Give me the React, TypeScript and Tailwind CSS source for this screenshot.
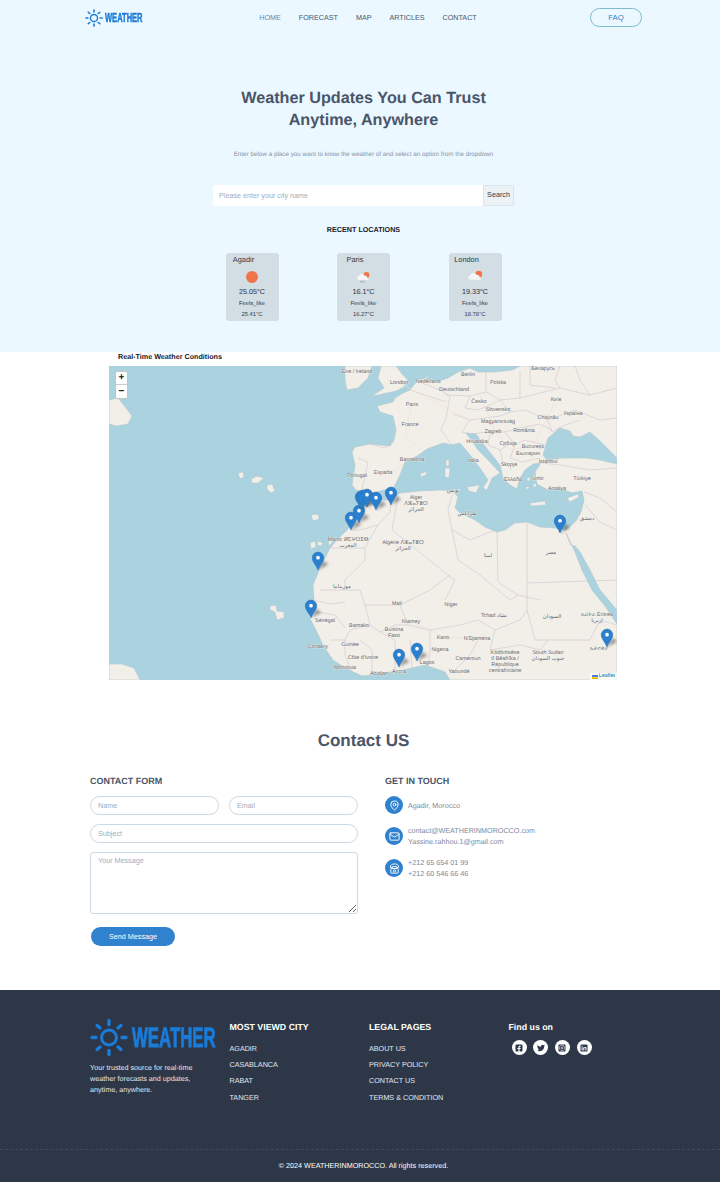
import { MapPin, Mail } from "lucide-react";
import { FaFacebookSquare, FaTwitter, FaInstagramSquare, FaLinkedin } from "react-icons/fa";

const navLinks = ["HOME", "FORECAST", "MAP", "ARTICLES", "CONTACT"];

const SunMark = ({ className }: { className: string }) => (
	<svg viewBox="0 0 38 38" className={className} fill="none" stroke="#1a7bd8" strokeLinecap="round">
		<circle cx="19" cy="19" r="7.500" strokeWidth="3" />
		<path strokeWidth="3.400" d="M19 2v4M19 32v4M2 19h4M32 19h4M7 7l3 2.500M31 7l-3 2.500M7 31l3-2.500M31 31l-3-2.500" />
	</svg>
);

const recent = [
	{ city: "Agadir", temp: "25.05°C", feels: "25.41°C", icon: "sun" },
	{ city: "Paris", temp: "16.1°C", feels: "16.27°C", icon: "rain" },
	{ city: "London", temp: "19.33°C", feels: "18.78°C", icon: "cloud" },
];

const WeatherIcon = ({ kind }: { kind: string }) => {
	if (kind === "sun") {
		return <div className="h-[12px] w-[12px] rounded-full bg-[#f0764a]" />;
	}
	return (
		<svg viewBox="0 0 18 14" className={kind === "rain" ? "h-[12px] w-[15px]" : "h-[13px] w-[17px]"}>
			<circle cx="12.500" cy="4.500" r="3.600" fill="#f0764a" />
			<path d="M3 10.500a2.400 2.400 0 0 1 .4-4.700 3.600 3.600 0 0 1 6.700-.6 2.800 2.800 0 0 1 3.400 2.800 1.300 1.300 0 0 1 .4 2.500z" fill="#f4f5f4" />
			{kind === "rain" && <path d="M6 11.500l-1 2.500M8 11.500l-1 2.500M10 11.500l-1 2.500" stroke="#8b96a0" strokeWidth=".8" />}
		</svg>
	);
};

const land = "M440 366L432 372 425 378 417 381 410 390 403 393 395 398 393 402 377 406 380 412 393 416 396 430 394 440 390 446 370 444 355 447 352 452 355 465 352 485 356 490 362 491 366 497 360 512 347 530 337 540 330 548 320 568 313 585 314 600 308 615 316 630 323 645 333 660 347 669 362 676 370 675 385 673 403 670 425 665 445 672 450 680 617 680 617 366Z";
const med = "M364 495L377 492 394 487 400 475 405 462 417 456 427 449 443 443 452 445 460 443 470 455 480 468 488 480 483 488 487 490 492 478 500 473 490 462 478 450 470 438 466 433 476 434 488 450 500 465 503 478 510 485 517 489 520 478 525 470 533 464 541 463 535 472 537 484 548 490 560 488 572 493 582 491 584 500 581 512 576 521 566 530 555 528 540 527 527 522 515 523 505 530 497 532 485 527 475 520 460 513 455 508 458 497 453 491 440 490 420 491 400 493 391 500 376 500 366 499Z";
const blackSea = "M543 455L548 438 560 428 570 431 573 436 580 437 590 432 600 441 607 448 617 458 617 464 600 460 587 458 563 458 547 460Z";
const redSea = "M566 533L571 545 575 546 580 552 590 570 600 590 617 610 617 624 605 606 592 590 582 570 575 552Z";
const northSea = "M440 366L520 366 512 370 495 372 478 372 470 368 458 372 448 378 436 382 425 380 432 372Z";
const islands = [
	"M381 366L396 366 402 374 408 380 404 387 396 391 378 395 372 396 384 388 378 378Z",
	"M345 366L372 366 368 378 358 388 347 390 345 380Z",
	"M109 400L118 398 126 408 132 416 128 424 116 426 109 424Z",
	"M109 664L122 664 134 668 140 680 109 680Z",
	"M238 473L243 472 244 477 240 479Z",
	"M251 479L257 476 264 478 258 483 252 483Z",
	"M267 485L272 484 275 491 271 493 267 489Z",
	"M311 515L318 514 319 519 313 521Z",
	"M310 543L315 541 316 547 311 549Z",
	"M318 541L323 543 321 546 317 545Z",
	"M329 541L333 536 332 543 328 546Z",
	"M270 606L276 605 277 611 284 612 284 618 277 620 275 612 270 610Z",
];
const medIslands = [
	"M467 487L480 485 476 493 469 491Z",
	"M446 460L449 460 449 466 446 466Z",
	"M445 468L450 468 449 478 445 477Z",
	"M420 474L427 471 426 475 421 477Z",
	"M530 503L545 501 546 505 531 506Z",
	"M567 498L578 494 579 497 570 502Z",
	"M527 478L530 477 530 481 527 481Z",
	"M533 484L536 483 536 487 533 487Z",
	"M526 487L529 486 529 489 526 489Z",
];
const borders = [
	"M417 381L440 390 450 396 446 418 441 430 452 445",
	"M410 390L425 395 446 402",
	"M446 395L470 396 486 392 500 400 520 398 520 372",
	"M486 392L486 370",
	"M500 400L510 412 525 410 548 420 575 410 600 420 617 418",
	"M453 414L470 420 485 418 500 416 510 412",
	"M470 420L462 432 470 434 490 432 505 432 520 428 540 424 552 430",
	"M505 432L515 445 525 440 545 445",
	"M515 445L510 458 522 462 540 458",
	"M520 398L560 388 590 395 617 388",
	"M530 366L530 385 555 388",
	"M370 444L385 448 394 441",
	"M358 458L368 462 362 490",
	"M542 463L560 465 590 470 617 468",
	"M584 492L600 498 617 512",
	"M585 505L600 522 617 530",
	"M470 396L465 408 478 410 490 405 500 400",
	"M490 432L488 445 500 450 508 445",
	"M500 450L503 462 512 470",
	"M548 420L552 432 565 425 580 420",
	"M575 366L580 380 590 395",
	"M560 366L555 380 560 388",
	"M391 500L390 512 378 525 360 530 352 530",
	"M398 496L392 530 448 575 455 580 445 600",
	"M453 492L448 510 452 530 470 540 495 530",
	"M452 530L458 560 480 575 510 600 518 595",
	"M497 532L498 582 518 595 540 600",
	"M527 522L527 583 617 580",
	"M527 583L527 610 535 640 548 640 590 640",
	"M330 548L365 548 365 560 345 580 345 590 360 590 365 605 400 605 430 590 450 575",
	"M365 548L378 525",
	"M345 590L330 590 320 590",
	"M365 605L370 625 350 630 345 640 330 640",
	"M400 605L408 625 395 625 380 632 370 625",
	"M408 625L430 630 460 625 478 620 495 630 490 650",
	"M430 630L430 650 428 665",
	"M380 632L395 640 395 670",
	"M410 640L412 668",
	"M478 640L470 655 455 670",
	"M490 650L520 645 540 650 548 640",
	"M360 640L372 650 372 674",
	"M345 640L345 655 352 672",
	"M590 640L600 620 617 625",
	"M495 630L520 620 527 610",
	"M312 600L330 604 345 602",
	"M318 612L335 615 345 628",
];
const roads = [
	"M400 382L415 392 440 405 470 420",
	"M412 403L405 435 420 450",
	"M383 472L395 470 412 459",
	"M480 395L495 431 510 450 533 446",
	"M556 399L548 417 533 446",
	"M340 530L375 505",
	"M411 621L443 637 477 638",
];
const labels: [number, number, string][] = [
	[357, 371, "Éire / Ireland"], [399, 382, "London"], [428, 381, "Nederland"], [454, 389, "Deutschland"], [468, 374, "Berlin"], [498, 382, "Polska"], [543, 368, "Беларусь"],
	[556, 399, "Київ"], [573, 413, "Україна"], [548, 417, "Chișinău"], [412, 404, "Paris"], [410, 424, "France"], [479, 401, "Česko"], [498, 409, "Slovensko"], [498, 421, "Magyarország"],
	[493, 431, "Zagreb"], [524, 430, "România"], [477, 441, "Hrvatska"], [508, 443, "Србија"], [533, 446, "București"], [528, 453, "България"], [473, 460, "Italia"], [509, 464, "Skopje"],
	[548, 461, "Istanbul"], [412, 459, "Barcelona"], [383, 472, "España"], [357, 475, "Portugal"], [513, 479, "Ελλάδα"], [538, 478, "İzmir"], [582, 478, "Türkiye"], [557, 488, "Antalya"], [416, 497, "Alger"],
	[416, 503, "ⴷⵣⴰⵢⴻⵔ"], [416, 509, "الجزائر"], [453, 490, "تونس"], [467, 513, "طرابلس"], [587, 518, "دمشق"], [403, 542, "Algérie ⴷⵣⴰⵢⴻⵔ"], [403, 548, "الجزائر"], [488, 555, "ليبيا"], [551, 552, "مصر"],
	[348, 539, "Maroc ⵍⵎⵖⵔⵉⴱ"], [348, 545, "المغرب"], [342, 586, "موريتانيا"], [397, 603, "Mali"], [451, 604, "Niger"], [494, 615, "Tchad تشاد"], [552, 616, "السودان"], [411, 621, "Niamey"], [394, 629, "Burkina"], [394, 635, "Faso"],
	[443, 637, "Kano"], [477, 638, "N'Djaména"], [440, 649, "Nigeria"], [427, 662, "Lagos"], [399, 671, "Accra"], [379, 673, "Abidjan"], [468, 658, "Cameroun"], [548, 652, "South Sudan"], [548, 658, "جنوب السودان"],
	[459, 671, "Yaoundé"], [505, 652, "Ködörösêse"], [505, 658, "tî Bêafrîka /"], [505, 664, "République"], [505, 670, "centrafricaine"], [599, 648, "ኢትዮጵያ"], [597, 614, "ኤርትራ Eritrea"], [597, 620, "إرتريا"],
	[325, 620, "Sénégal"], [318, 646, "Conakry"], [350, 644, "Guinée"], [359, 625, "Bamako"], [345, 667, "Monrovia"], [363, 657, "Côte d'Ivoire"],
];
const pins = [
	[318, 570], [311, 618], [351, 530], [359, 523], [361, 509], [363, 508], [367, 507], [376, 510], [391, 505], [560, 533], [607, 647], [399, 667], [417, 661],
];

const MapCanvas = () => (
	<svg viewBox="109 366 508 314" className="block h-full w-full">
		<defs>
			<filter id="pin-shadow" x="-50%" y="-50%" width="200%" height="200%">
				<feGaussianBlur stdDeviation="2" />
			</filter>
		</defs>
		<rect x="109" y="366" width="508" height="314" fill="#aad3df" />
		<path d={land} fill="#f2efe9" stroke="#b4c6cf" strokeWidth=".6" />
		{islands.map((d) => (
			<path key={d} d={d} fill="#f2efe9" stroke="#b4c6cf" strokeWidth=".6" />
		))}
		{borders.map((d) => (
			<path key={d} d={d} fill="none" stroke="#cfc5cf" strokeWidth=".6" />
		))}
		{roads.map((d) => (
			<path key={d} d={d} fill="none" stroke="#e9e1d2" strokeWidth=".6" />
		))}
		{[med, blackSea, redSea, northSea].map((d) => (
			<path key={d} d={d} fill="#aad3df" stroke="#b4c6cf" strokeWidth=".6" />
		))}
		{medIslands.map((d) => (
			<path key={d} d={d} fill="#f2efe9" stroke="#b4c6cf" strokeWidth=".6" />
		))}
		{labels.map(([x, y, text]) => (
			<text
				key={`${x}-${y}`}
				x={x}
				y={y + 2}
				textAnchor="middle"
				fontSize="5.400"
				fill="#64666a"
				stroke="#f6f4f0"
				strokeWidth=".6"
				paintOrder="stroke"
			>
				{text}
			</text>
		))}
		{pins.map(([x, y]) => (
			<g key={`${x}-${y}`} transform={`translate(${x} ${y}) scale(.92)`}>
				<path d="M0 0L11 -6 6 -10Z" fill="#444" opacity=".55" filter="url(#pin-shadow)" />
				<path d="M0 0C-2 -5 -6.300 -9 -6.300 -13.200A6.300 6.300 0 0 1 6.300 -13.200C6.300 -9 2 -5 0 0Z" fill="#2a7fcf" stroke="#2469a8" strokeWidth=".5" />
				<circle cx="0" cy="-13.400" r="2" fill="#fff" />
			</g>
		))}
	</svg>
);

const PhoneIcon = () => (
	<svg viewBox="0 0 12 12" className="h-[11px] w-[11px]" fill="none" stroke="#fff" strokeWidth="1">
		<path d="M1.500 4.500C1.500 2 3.500 1 6 1s4.500 1 4.500 3.500V5H8.200V4H3.800V5H1.500z" />
		<rect x="2" y="6" width="8" height="5" rx=".6" />
		<circle cx="6" cy="8.500" r="1.200" />
	</svg>
);

const contactRows = [
	{ id: "place", icon: <MapPin size={11} color="#fff" />, lines: ["Agadir, Morocco"], className: "" },
	{ id: "mail", icon: <Mail size={11} color="#fff" />, lines: ["contact@WEATHERINMOROCCO.com", "Yassine.rahhou.1@gmail.com"], className: "mt-[11px]" },
	{ id: "phone", icon: <PhoneIcon />, lines: ["+212 65 654 01 99", "+212 60 546 66 46"], className: "mt-[10px]" },
];

const footerCols = [
	{ title: "MOST VIEWD CITY", links: ["AGADIR", "CASABLANCA", "RABAT", "TANGER"] },
	{ title: "LEGAL PAGES", links: ["ABOUT US", "PRIVACY POLICY", "CONTACT US", "TERMS & CONDITION"] },
];

const socials = [FaFacebookSquare, FaTwitter, FaInstagramSquare, FaLinkedin];

export default function App() {
	return (
		<div className="h-[1182px] w-[720px] overflow-hidden bg-white font-['Liberation_Sans',Arial,sans-serif] [text-rendering:geometricPrecision]">
			{/* hero */}
			<section className="h-[352px] bg-[#ebf8ff]">
				<header className="flex h-[35px] items-center justify-between pl-[85px] pr-[78px]">
					<div className="flex w-[59px] items-center gap-[2px]">
						<SunMark className="h-[22px] w-[18px] shrink-0" />
						<span className="w-[39px] origin-left scale-x-[0.58] whitespace-nowrap text-[13px] leading-none font-bold text-[#1a7bd8] [-webkit-text-stroke:0.5px_#1a7bd8]">
							WEATHER
						</span>
					</div>
					<nav className="ml-[2px] flex gap-[18px] text-[7.200px] leading-none text-[#4a5568]">
						{navLinks.map((link) => (
							<a key={link} className={link === "HOME" ? "text-[#4f8fc0]" : ""}>
								{link}
							</a>
						))}
					</nav>
					<button className="h-[19px] w-[52px] rounded-full border border-[#7fbcd2] text-[7.800px] text-[#3182ce]">
						FAQ
					</button>
				</header>

				<div className="flex flex-col items-center pl-[7px]">
					<h1 className="mt-[52px] text-center text-[16.200px] leading-[22px] font-bold text-[#4a5568]">
						Weather Updates You Can Trust
						<br />
						Anytime, Anywhere
					</h1>
					<p className="mt-[18px] text-[6.300px] leading-[12px] text-[#8792a5]">
						Enter below a place you want to know the weather of and select an option from the dropdown
					</p>
					<div className="mt-[24px] flex h-[21px] w-[301px]">
						<input
							placeholder="Please enter your city name"
							className="h-full w-[270px] rounded-l-[2px] bg-white px-[6px] text-[7.200px] outline-none placeholder:text-[#a0aec0]"
						/>
						<button className="h-full w-[31px] rounded-r-[2px] border border-[#dbe4ea] bg-[#edf2f7] text-[7.200px] text-[#2d3748]">
							Search
						</button>
					</div>
					<h2 className="mt-[19px] text-[7.200px] leading-[10px] font-bold text-[#1a202c]">RECENT LOCATIONS</h2>
					<div className="mt-[18px] flex gap-[58.500px]">
						{recent.map((item) => (
							<div key={item.city} className="flex h-[68px] w-[53px] flex-col items-center rounded-[3px] bg-[#d3dde4] text-[#2d3748]">
								<div className="mt-[3px] w-[36px] self-start text-center text-[7.400px] leading-[8px] whitespace-nowrap">{item.city}</div>
								<div className="mt-[5px] flex h-[15px] items-center">
									<WeatherIcon kind={item.icon} />
								</div>
								<div className="mt-[3px] text-[7.200px] leading-[10px]">{item.temp}</div>
								<div className="mt-[3px] text-[5.800px] leading-[9px] text-[#2d3748]">Feels_like</div>
								<div className="mt-[2px] text-[5.800px] leading-[9px] text-[#2d3748]">{item.feels}</div>
							</div>
						))}
					</div>
				</div>
			</section>

			{/* map */}
			<section>
				<h3 className="ml-[118px] h-[14px] text-[7.200px] leading-[9px] font-bold text-[#1a202c]">
					Real-Time Weather Conditions
				</h3>
				<div className="relative ml-[109px] h-[314px] w-[508px]">
					<MapCanvas />
					<div className="absolute top-[5px] left-[6px] flex w-[13px] flex-col overflow-hidden rounded-[2px] border border-[#c4c4c4] bg-white text-[#111]">
						<span className="flex h-[13px] items-center justify-center border-b border-[#ccc] text-[10px] leading-none font-bold">+</span>
						<span className="flex h-[13px] items-center justify-center text-[10px] leading-none font-bold">−</span>
					</div>
					<div className="absolute right-0 bottom-0 flex h-[7px] items-center gap-[1px] bg-white/70 px-[2px] text-[5.400px] leading-none text-[#0078a8]">
						<svg viewBox="0 0 6 4" className="h-[4px] w-[6px]">
							<rect width="6" height="2" fill="#4c7be1" />
							<rect y="2" width="6" height="1" fill="#ffd500" />
							<rect y="3" width="6" height="1" fill="#e0bc00" />
						</svg>
						Leaflet
					</div>
				</div>
			</section>

			{/* contact */}
			<section className="h-[310px] pt-[50px]">
				<h2 className="pl-[7px] text-center text-[17px] leading-[22px] font-bold text-[#4a5568]">Contact US</h2>
				<div className="mt-[24px] flex pl-[90px]">
					<form className="w-[268px]">
						<h3 className="text-[9px] leading-[11px] font-bold text-[#4a5568]">CONTACT FORM</h3>
						<div className="mt-[9px] flex gap-[10px]">
							<input placeholder="Name" className="h-[19px] w-[129px] rounded-full border border-[#cbd9e2] px-[7px] text-[7.200px] outline-none placeholder:text-[#a0aec0]" />
							<input placeholder="Email" className="h-[19px] w-[129px] rounded-full border border-[#cbd9e2] px-[7px] text-[7.200px] outline-none placeholder:text-[#a0aec0]" />
						</div>
						<input placeholder="Subject" className="mt-[9px] block h-[19px] w-[268px] rounded-full border border-[#cbd9e2] px-[7px] text-[7.200px] outline-none placeholder:text-[#a0aec0]" />
						<textarea placeholder="Your Message" className="mt-[9px] block h-[62px] w-[268px] rounded-[3px] border border-[#cbd9e2] px-[7px] py-[3px] text-[7.200px] outline-none placeholder:text-[#a0aec0]" />
						<button type="button" className="mt-[13px] ml-px h-[19px] w-[84px] rounded-full bg-[#3182ce] pt-px text-[7.200px] text-white">
							Send Message
						</button>
					</form>
					<div className="ml-[27px]">
						<h3 className="text-[9px] leading-[11px] font-bold text-[#4a5568]">GET IN TOUCH</h3>
						<div className="mt-[9px]">
							{contactRows.map((row) => (
								<div key={row.id} className={`flex items-center gap-[5px] ${row.className}`}>
									<span className="flex h-[18px] w-[18px] items-center justify-center rounded-full bg-[#3182ce]">{row.icon}</span>
									<div className="text-[7.200px] leading-[11px] text-[#7c889c]">
										{row.lines.map((line) => (
											<div key={line}>{line}</div>
										))}
									</div>
								</div>
							))}
						</div>
					</div>
				</div>
			</section>

			{/* footer */}
			<footer className="h-[192px] bg-[#2d3748] text-white">
				<div className="flex h-[159px] pt-[28px] pl-[90px]">
					<div className="w-[139.500px]">
						<div className="flex w-[126px] items-center gap-[4px]">
							<SunMark className="h-[39px] w-[38px] shrink-0" />
							<span className="w-[84px] origin-left scale-x-[0.6] whitespace-nowrap text-[28px] leading-none font-bold text-[#1a7bd8] [-webkit-text-stroke:1px_#1a7bd8]">
								WEATHER
							</span>
						</div>
						<p className="mt-[6px] w-[112px] text-[7.200px] leading-[10.800px] text-[#e2e8f0]">
							Your trusted source for real-time weather forecasts and updates, anytime, anywhere.
						</p>
					</div>
					{footerCols.map((col) => (
						<div key={col.title} className="w-[139.500px]">
							<h4 className="mt-[3px] text-[8.800px] leading-[12px] font-bold">{col.title}</h4>
							<ul className="mt-[11px] flex flex-col gap-[6.700px] text-[7.200px] leading-[9.500px] text-[#e2e8f0]">
								{col.links.map((link) => (
									<li key={link}>{link}</li>
								))}
							</ul>
						</div>
					))}
					<div>
						<h4 className="mt-[3px] text-[8.800px] leading-[12px] font-bold">Find us on</h4>
						<div className="mt-[7px] ml-[3px] flex gap-[6.700px]">
							{socials.map((Icon, i) => (
								<span key={i} className="flex h-[15px] w-[15px] items-center justify-center rounded-full bg-white text-[#2d3748]">
									<Icon size={8} />
								</span>
							))}
						</div>
					</div>
				</div>
				<div className="border-t border-dashed border-[#3f4a5c] pt-[11px] pl-[7px] text-center text-[7.200px] leading-[10px]">
					© 2024 WEATHERINMOROCCO. All rights reserved.
				</div>
			</footer>
		</div>
	);
}
